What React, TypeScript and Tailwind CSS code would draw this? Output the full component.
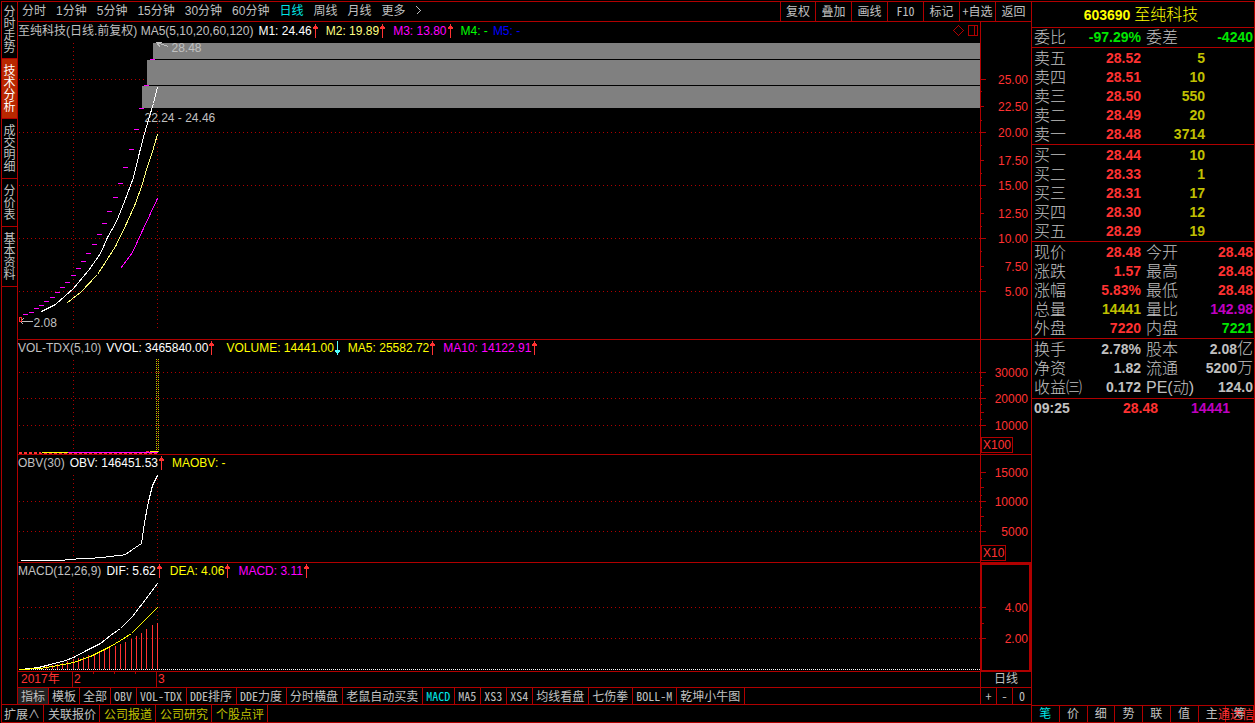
import type { ReactNode } from 'react'
import clsx from 'clsx'

const LINE = '#b00000'
const MAGENTA = '#ff00ff'

type Point = [number, number]

const toPoints = (list: Point[]) => list.map(([x, y]) => `${x},${y}`).join(' ')

/* ---------- data ---------- */

const sideTabs = [
  { label: '分时走势', height: 'h-[57px]' },
  { label: '技术分析', height: 'h-[60px]', active: true },
  { label: '成交明细', height: 'h-[60px]' },
  { label: '分价表', height: 'h-[48px]' },
  { label: '基本资料', height: 'h-[60px]' },
]

const periods = ['分时', '1分钟', '5分钟', '15分钟', '30分钟', '60分钟', '日线', '周线', '月线', '更多']
const tools = ['复权', '叠加', '画线', 'F10', '标记', '+自选', '返回']

const views = ['指标', '模板', '全部']
const templates = [
  'OBV', 'VOL-TDX', 'DDE排序', 'DDE力度', '分时横盘', '老鼠自动买卖',
  'MACD', 'MA5', 'XS3', 'XS4', '均线看盘', '七伤拳', 'BOLL-M', '乾坤小牛图',
]

const links = [
  { label: '扩展∧' },
  { label: '关联报价' },
  { label: '公司报道', gold: true },
  { label: '公司研究', gold: true },
  { label: '个股点评', gold: true },
]

const sells = [
  ['卖五', '28.52', '5'],
  ['卖四', '28.51', '10'],
  ['卖三', '28.50', '550'],
  ['卖二', '28.49', '20'],
  ['卖一', '28.48', '3714'],
]

const buys = [
  ['买一', '28.44', '10'],
  ['买二', '28.33', '1'],
  ['买三', '28.31', '17'],
  ['买四', '28.30', '12'],
  ['买五', '28.29', '19'],
]

const RED = 'text-[#ff3232]'
const GOLD = 'text-[#c0c000]'
const PURPLE = 'text-[#c000c0]'
const GREEN = 'text-[#00e600]'
const GREY = 'text-[#c0c0c0]'

type Quote = { a: string; av: string; ac: string; b: string; bv: string; bc: string; unit?: string }

const ratio: Quote[] = [{ a: '委比', av: '-97.29%', ac: GREEN, b: '委差', bv: '-4240', bc: GREEN }]

const quotes: Quote[] = [
  { a: '现价', av: '28.48', ac: RED, b: '今开', bv: '28.48', bc: RED },
  { a: '涨跌', av: '1.57', ac: RED, b: '最高', bv: '28.48', bc: RED },
  { a: '涨幅', av: '5.83%', ac: RED, b: '最低', bv: '28.48', bc: RED },
  { a: '总量', av: '14441', ac: GOLD, b: '量比', bv: '142.98', bc: PURPLE },
  { a: '外盘', av: '7220', ac: RED, b: '内盘', bv: '7221', bc: GREEN },
]

const finance: Quote[] = [
  { a: '换手', av: '2.78%', ac: GREY, b: '股本', bv: '2.08', bc: GREY, unit: '亿' },
  { a: '净资', av: '1.82', ac: GREY, b: '流通', bv: '5200', bc: GREY, unit: '万' },
  { a: '收益㈢', av: '0.172', ac: GREY, b: 'PE(动)', bv: '124.0', bc: GREY },
]

const detailTabs = ['笔', '价', '细', '势', '联', '值', '主', '筹']

const priceDashes: Point[] = [
  [150, 59], [144, 85], [139, 108], [134, 129], [129, 149], [123, 167], [118, 183], [113, 197],
  [107, 211], [102, 223], [97, 234], [92, 244], [86, 253], [81, 261], [76, 268], [71, 275],
  [65, 282], [60, 287], [55, 292], [50, 297], [44, 301], [39, 305], [34, 308], [29, 312], [23, 314],
]

const ma5: Point[] = [
  [41, 311], [55, 304], [73, 288], [88, 270], [100, 253], [107, 237], [116, 221], [124, 201],
  [133, 177], [139, 152], [144, 133], [148, 119], [153, 103], [157, 87],
]
const ma10: Point[] = [
  [67, 302], [80, 292], [97, 274], [115, 246], [127, 221], [135, 203], [142, 183], [146, 169],
  [152, 151], [157, 134],
]
const ma20: Point[] = [[120, 268], [132, 252], [142, 230], [150, 213], [157, 198]]

const obv: Point[] = [
  [20, 560], [64, 560], [65, 559], [86, 558], [104, 557], [107, 556], [120, 555], [125, 554],
  [132, 549], [141, 543], [144, 522], [148, 501], [152, 485], [157, 475],
]

const dif: Point[] = [
  [19, 669], [30, 668], [38, 667], [50, 664], [65, 660], [73, 657], [86, 650], [100, 643],
  [110, 635], [120, 628], [132, 616], [145, 599], [157, 583],
]
const dea: Point[] = [
  [19, 669], [40, 668], [52, 666], [73, 662], [90, 656], [110, 646], [120, 640], [131, 633],
  [145, 619], [157, 607],
]
const macdBars: Point[] = [
  [157, 622], [152, 624], [146, 628], [141, 632], [136, 635], [131, 638], [125, 641], [120, 643],
  [115, 645], [109, 647], [104, 649], [99, 651], [94, 653], [88, 654], [83, 656], [78, 657],
  [73, 658], [67, 660], [62, 662], [57, 663], [52, 664], [46, 665], [41, 667], [36, 668],
]

/* ---------- small parts ---------- */

function Arrow({ down = false }: { down?: boolean }) {
  return (
    <svg
      width="5"
      height="14"
      shapeRendering="crispEdges"
      className={clsx('shrink-0', down ? 'rotate-180 text-[#54ffff]' : 'text-[#ff3232]')}
      aria-hidden="true"
    >
      <path d="M2 0h1v14h-1zM1 2h3v1h-3zM0 3h5v2h-5z" fill="currentColor" />
    </svg>
  )
}

function Reading({ color, children, arrow }: { color: string; children: ReactNode; arrow?: 'up' | 'down' }) {
  return (
    <span className={clsx('flex items-center', color, arrow ? 'mr-2 gap-px' : 'mr-[5px]')}>
      {children}
      {arrow && <Arrow down={arrow === 'down'} />}
    </span>
  )
}

function Grid({ rows, from, to }: { rows: number[]; from: number; to: number }) {
  return (
    <g stroke={LINE} strokeDasharray="1 3">
      {rows.map((y) => (
        <line key={y} x1="18.5" x2="150%" y1={y} y2={y} />
      ))}
      <line x1="73" x2="73" y1={from} y2={to} />
      <line x1="157" x2="157" y1={from} y2={to} />
    </g>
  )
}

/* Plot area; children draw in page coordinates starting at (18, top). */
function Plot({ top, className, label, children }: { top: number; className: string; label: string; children: ReactNode }) {
  return (
    <svg width="100%" className={clsx('block', className)} shapeRendering="crispEdges" role="img" aria-label={label}>
      <g transform={`translate(-17.5 ${0.5 - top})`} fill="none">
        {children}
      </g>
    </svg>
  )
}

type Tick = { y: number; size: number; text?: string }

function Axis({ top, ticks, scale, active }: { top: number; ticks: Tick[]; scale?: string; active?: boolean }) {
  return (
    <div
      className={clsx(
        'flex w-[51px] shrink-0 flex-col border-[#b00000] text-[#ff3232]',
        active ? 'border-2 border-b' : 'border-l',
      )}
    >
      <svg width="100%" className="h-0 grow" shapeRendering="crispEdges">
        <g transform={`translate(0 ${0.5 - top - (active ? 2 : 0)})`}>
          {ticks.map((t) => (
            <line key={t.y} x1="0" x2={t.size} y1={t.y} y2={t.y} stroke={LINE} />
          ))}
          {ticks.map(
            (t) =>
              t.text && (
                <text key={t.text} x={active ? 46 : 47} y={t.y + 4} textAnchor="end" fontSize="12" fill="currentColor">
                  {t.text}
                </text>
              ),
          )}
        </g>
      </svg>
      {scale && <span className="mb-px h-4 self-start border border-[#b00000] px-px leading-[14px]">{scale}</span>}
    </div>
  )
}

type PanelProps = { className: string; headerClass?: string; header: ReactNode; children: ReactNode; axis: ReactNode }

function Panel({ className, headerClass = 'h-4', header, children, axis }: PanelProps) {
  return (
    <section className={clsx('flex border-b border-[#b00000]', className)}>
      <div className="min-w-0 grow">
        <div className={clsx('flex items-center whitespace-nowrap', headerClass)}>{header}</div>
        {children}
      </div>
      {axis}
    </section>
  )
}

function OrderBook({ rows, caption }: { rows: string[][]; caption: string }) {
  return (
    <div className="border-b border-[#b00000] pt-px">
      <table className="w-full table-fixed" aria-label={caption}>
        <tbody>
          {rows.map(([name, price, volume]) => (
            <tr key={name} className="h-[19px] leading-[19px]">
              <th className="w-[49px] p-0 pl-[2px] text-left text-[16px] font-light">{name}</th>
              <td className="w-[60px] p-0 text-right text-[14px] font-bold text-[#ff3232]">{price}</td>
              <td className="w-[64px] p-0 text-right text-[14px] font-bold text-[#c0c000]">{volume}</td>
              <td className="p-0" />
            </tr>
          ))}
        </tbody>
      </table>
    </div>
  )
}

function QuoteTable({ rows, caption, className }: { rows: Quote[]; caption: string; className?: string }) {
  return (
    <div className={clsx('border-b border-[#b00000]', className)}>
      <table className="w-full table-fixed" aria-label={caption}>
        <tbody>
          {rows.map((q) => (
            <tr key={q.a} className="h-[19px] leading-[19px] whitespace-nowrap">
              <th className="w-[52px] p-0 pl-[2px] text-left text-[16px] font-light">{q.a}</th>
              <td className={clsx('w-[57px] p-0 text-right text-[14px] font-bold', q.ac)}>{q.av}</td>
              <th className="w-[54px] p-0 pl-[5px] text-left text-[16px] font-light">{q.b}</th>
              <td className={clsx('p-0 pr-px text-right text-[14px] font-bold', q.bc)}>
                {q.bv}
                {q.unit && <span className="text-[16px] leading-none font-light">{q.unit}</span>}
              </td>
            </tr>
          ))}
        </tbody>
      </table>
    </div>
  )
}

const mono = "font-['Noto_Sans_Mono_CJK_SC','Liberation_Mono','Noto_Sans_CJK_SC',monospace]"

/* ---------- charts ---------- */

function PriceChart() {
  return (
    <Panel
      className="grow"
      headerClass="h-[18px]"
      header={
        <>
          <Reading color={GREY}>至纯科技(日线.前复权) MA5(5,10,20,60,120)</Reading>
          <Reading color="text-white" arrow="up">M1: 24.46</Reading>
          <Reading color="text-[#ffff80]" arrow="up">M2: 19.89</Reading>
          <Reading color="text-[#ff00ff]" arrow="up">M3: 13.80</Reading>
          <Reading color="text-[#00ff00]">M4: -</Reading>
          <Reading color="text-[#0000ff]">M5: -</Reading>
          <svg width="26" height="12" className="mr-px ml-auto shrink-0" shapeRendering="crispEdges" aria-hidden="true">
            <path
              d="M5 0h1v1h-1zM4 1h1v1h-1zM6 1h1v1h-1zM3 2h1v1h-1zM7 2h1v1h-1zM2 3h1v1h-1zM8 3h1v1h-1zM1 4h1v1h-1zM9 4h1v1h-1zM0 5h1v1h-1zM10 5h1v1h-1zM1 6h1v1h-1zM9 6h1v1h-1zM2 7h1v1h-1zM8 7h1v1h-1zM3 8h1v1h-1zM7 8h1v1h-1zM4 9h1v1h-1zM6 9h1v1h-1zM5 10h1v1h-1z"
              fill={LINE}
            />
            <path d="M15.500 .5h9v10h-9zM21.500 .5v10" fill="none" stroke={LINE} />
          </svg>
        </>
      }
      axis={
        <Axis
          top={22}
          ticks={[
            { y: 79, size: 5, text: '25.00' },
            { y: 91, size: 1 },
            { y: 106, size: 3, text: '22.50' },
            { y: 120, size: 1 },
            { y: 132, size: 5, text: '20.00' },
            { y: 145, size: 1 },
            { y: 160, size: 3, text: '17.50' },
            { y: 173, size: 1 },
            { y: 185, size: 5, text: '15.00' },
            { y: 198, size: 1 },
            { y: 213, size: 3, text: '12.50' },
            { y: 226, size: 1 },
            { y: 238, size: 5, text: '10.00' },
            { y: 251, size: 1 },
            { y: 266, size: 3, text: '7.50' },
            { y: 279, size: 1 },
            { y: 291, size: 5, text: '5.00' },
          ]}
        />
      }
    >
      <Plot top={40} className="h-[299px]" label="日线走势">
        <Grid rows={[79, 132, 185, 238, 291]} from={42} to={327} />
        <g transform="translate(-.5 -.5)" fill="#808080">
          <rect x="153" y="43" width="100%" height="16" />
          <rect x="147" y="60" width="100%" height="25" />
          <rect x="142" y="86" width="100%" height="22" />
          <rect x="147" y="59" width="100%" height="1" fill="#000" />
          <rect x="142" y="85" width="100%" height="1" fill="#000" />
        </g>
        {priceDashes.map(([x, y]) => (
          <path key={y} d={`M${x - 0.5} ${y}h5`} stroke={MAGENTA} />
        ))}
        <g fill="#c0c0c0" fontSize="12">
          <text x="171" y="51">28.48</text>
          <text x="144" y="121">22.24 - 24.46</text>
          <text x="33" y="326">2.08</text>
        </g>
        <path d="M168 46l-12-4M156 42h5M156 42l4 5" stroke="#c0c0c0" />
        <path d="M20 321h12M20 321l3-3M20 321l3 3" stroke="#c0c0c0" />
        <path d="M19 317h2v4h-2z" stroke="#ff3232" />
        <polyline points={toPoints(ma5)} stroke="#fff" />
        <polyline points={toPoints(ma10)} stroke="#ffff80" />
        <polyline points={toPoints(ma20)} stroke={MAGENTA} />
      </Plot>
    </Panel>
  )
}

function VolumeChart() {
  return (
    <Panel
      className="h-[115px]"
      header={
        <>
          <Reading color={GREY}>VOL-TDX(5,10)</Reading>
          <Reading color="text-white" arrow="up">VVOL: 3465840.00</Reading>
          <span className="w-1" />
          <Reading color="text-[#ffff00]" arrow="down">VOLUME: 14441.00</Reading>
          <Reading color="text-[#ffff00]" arrow="up">MA5: 25582.72</Reading>
          <Reading color="text-[#ff00ff]" arrow="up">MA10: 14122.91</Reading>
        </>
      }
      axis={
        <Axis
          top={340}
          scale="X100"
          ticks={[
            { y: 372, size: 5, text: '30000' },
            { y: 377, size: 1 },
            { y: 385, size: 3 },
            { y: 392, size: 1 },
            { y: 398, size: 5, text: '20000' },
            { y: 404, size: 1 },
            { y: 412, size: 3 },
            { y: 419, size: 1 },
            { y: 425, size: 5, text: '10000' },
          ]}
        />
      }
    >
      <Plot top={356} className="h-[98px]" label="成交量">
        <Grid rows={[372, 398, 425]} from={359} to={453} />
        <path d="M156 358.500v94M158 358.500v94" stroke="#c0c000" strokeDasharray="1 1" />
        <path d="M18.500 453h140" stroke="#ff3232" strokeDasharray="3 2" />
        <path d="M18.500 452h22" stroke="#ff3232" strokeDasharray="3 2" />
        <path d="M41 452h26" stroke="#ffff00" />
        <path d="M67 452h90" stroke={MAGENTA} />
        <path d="M145 451h3" stroke="#ff3232" />
        <path d="M149 451h8" stroke="#ffff00" />
      </Plot>
    </Panel>
  )
}

function ObvChart() {
  return (
    <Panel
      className="h-[108px]"
      header={
        <>
          <Reading color={GREY}>OBV(30)</Reading>
          <Reading color="text-white" arrow="up">OBV: 146451.53</Reading>
          <Reading color="text-[#ffff00]">MAOBV: -</Reading>
        </>
      }
      axis={
        <Axis
          top={455}
          scale="X10"
          ticks={[
            { y: 472, size: 5, text: '15000' },
            { y: 478, size: 1 },
            { y: 487, size: 3 },
            { y: 495, size: 1 },
            { y: 501, size: 5, text: '10000' },
            { y: 507, size: 1 },
            { y: 516, size: 3 },
            { y: 525, size: 1 },
            { y: 531, size: 5, text: '5000' },
          ]}
        />
      }
    >
      <Plot top={471} className="h-[91px]" label="能量潮">
        <Grid rows={[501, 531]} from={474} to={560} />
        <polyline points={toPoints(obv)} stroke="#fff" />
      </Plot>
    </Panel>
  )
}

function MacdChart() {
  return (
    <Panel
      className="h-[109px]"
      header={
        <>
          <Reading color={GREY}>MACD(12,26,9)</Reading>
          <Reading color="text-white" arrow="up">DIF: 5.62</Reading>
          <Reading color="text-[#ffff00]" arrow="up">DEA: 4.06</Reading>
          <Reading color="text-[#ff00ff]" arrow="up">MACD: 3.11</Reading>
        </>
      }
      axis={
        <Axis
          top={563}
          active
          ticks={[
            { y: 607, size: 4, text: '4.00' },
            { y: 623, size: 2 },
            { y: 638, size: 4, text: '2.00' },
          ]}
        />
      }
    >
      <Plot top={579} className="h-[92px]" label="MACD">
        <Grid rows={[607, 638]} from={582} to={668} />
        <path d="M18.500 669h4000" stroke="#fff" strokeDasharray="1 1" />
        {macdBars.map(([x, y]) => (
          <path key={x} d={`M${x} ${y}V668.500`} stroke="#ff3232" />
        ))}
        <polyline points={toPoints(dif)} stroke="#fff" />
        <polyline points={toPoints(dea)} stroke="#ffff00" />
      </Plot>
    </Panel>
  )
}

/* ---------- page ---------- */

export default function App() {
  return (
    <div className="flex min-h-screen bg-black pt-px pl-px font-['Liberation_Sans','Noto_Sans_CJK_SC',sans-serif] text-[12px] leading-none text-[#c0c0c0]">
      <div className="flex min-w-0 grow flex-col border-y border-[#b00000]">
        <div className="flex grow border-b border-[#b00000]">
          <nav className="flex w-[17px] shrink-0 flex-col border-x border-[#b00000]">
            {sideTabs.map((tab) => (
              <button
                key={tab.label}
                className={clsx(
                  'flex items-center justify-center border-b border-[#b00000]',
                  tab.height,
                  tab.active && 'bg-[#b82800] text-white',
                )}
              >
                <span className="w-3 leading-3 break-all">{tab.label}</span>
              </button>
            ))}
          </nav>

          <div className="flex min-w-0 grow flex-col">
            <header className="flex h-5 border-b border-[#b00000] whitespace-nowrap">
              <nav className="flex grow items-center gap-[10px] pb-0.5 pl-1">
                {periods.map((p) => (
                  <button key={p} className={clsx(p === '日线' && 'text-[#00e6e6]')}>
                    {p}
                  </button>
                ))}
                <svg width="6" height="9" fill="none" stroke="#c0c0c0" shapeRendering="crispEdges" aria-hidden="true">
                  <path d="M.5 .5l4 4-4 4" />
                </svg>
              </nav>
              {tools.map((t) => (
                <button key={t} className={clsx('w-9 shrink-0 border-l border-[#b00000] pb-0.5 first-of-type:w-[35px]', mono)}>
                  {t}
                </button>
              ))}
            </header>

            <PriceChart />
            <VolumeChart />
            <ObvChart />
            <MacdChart />

            <div className="flex h-4 border-b border-[#b00000] leading-[15px] text-[#ff3232]">
              <div className="w-[55px] shrink-0 border-r border-[#b00000] pl-[3px]">2017年</div>
              <div className="flex w-[84px] shrink-0 border-r border-[#b00000]">
                <span className="w-5 pl-px">2</span>
                <svg width="43" height="2" fill={LINE} shapeRendering="crispEdges" aria-hidden="true">
                  <path d="M0 0h1v2h-1zM21 0h1v2h-1zM42 0h1v2h-1z" />
                </svg>
              </div>
              <div className="grow pl-px">3</div>
              <div className="w-[51px] shrink-0 border-l border-[#b00000] text-center text-[#c0c0c0]">日线</div>
            </div>

            <div className={clsx('flex h-4 whitespace-nowrap', mono)}>
              {views.map((t) => (
                <button
                  key={t}
                  className={clsx('shrink-0 border-r border-[#b00000] px-[3px]', t === '指标' && 'bg-[#222222]')}
                >
                  {t}
                </button>
              ))}
              {templates.map((t) => (
                <button
                  key={t}
                  className={clsx('shrink-0 border-r border-[#b00000] pr-1 pl-[3px]', t === 'MACD' && 'text-[#00e6e6]')}
                >
                  {t}
                </button>
              ))}
              <div className="ml-auto flex w-[51px] shrink-0">
                <button className="w-4 border-l border-[#b00000]">+</button>
                <button className="w-4 border-l border-[#b00000]">-</button>
                <button className="grow border-l border-[#b00000]">0</button>
              </div>
            </div>
          </div>
        </div>

        <nav className={clsx('flex h-[17px] shrink-0 border-l border-[#b00000] whitespace-nowrap', mono)}>
          {links.map((l) => (
            <button
              key={l.label}
              className={clsx('border-r border-[#b00000] pr-[3px] pl-1 first:pl-[2px]', l.gold && 'text-[#c0c000]')}
            >
              {l.label}
            </button>
          ))}
        </nav>
      </div>

      <aside className="flex w-[224px] shrink-0 flex-col border border-[#b00000]">
        <h1 className="flex h-[26px] items-center justify-center gap-1 border-b border-[#b00000] pr-1 text-[#ffff00]">
          <span className="text-[14px] font-bold">603690</span>
          <span className="text-[16px] font-light">至纯科技</span>
        </h1>
        <QuoteTable rows={ratio} caption="委比" />
        <OrderBook rows={sells} caption="卖盘" />
        <OrderBook rows={buys} caption="买盘" />
        <QuoteTable rows={quotes} caption="行情" className="pt-px" />
        <QuoteTable rows={finance} caption="财务" className="py-px" />
        <table className="w-full table-fixed text-[14px] font-bold" aria-label="成交">
          <tbody>
            <tr className="h-[18px]">
              <td className="w-[60px] p-0 pl-[2px]">09:25</td>
              <td className="w-[66px] p-0 text-right text-[#ff3232]">28.48</td>
              <td className="w-[72px] p-0 text-right text-[#c000c0]">14441</td>
              <td className="p-0" />
            </tr>
          </tbody>
        </table>
        <nav className="relative mt-auto flex h-[17px] border-t border-[#b00000]">
          {detailTabs.map((t) => (
            <button key={t} className={clsx('grow border-r border-[#b00000] last:border-r-0', t === '笔' && 'text-[#00e6e6]')}>
              {t}
            </button>
          ))}
          <span className="absolute right-0 bottom-0 leading-[14px] text-[#ff3232]">通达信</span>
        </nav>
      </aside>
    </div>
  )
}
